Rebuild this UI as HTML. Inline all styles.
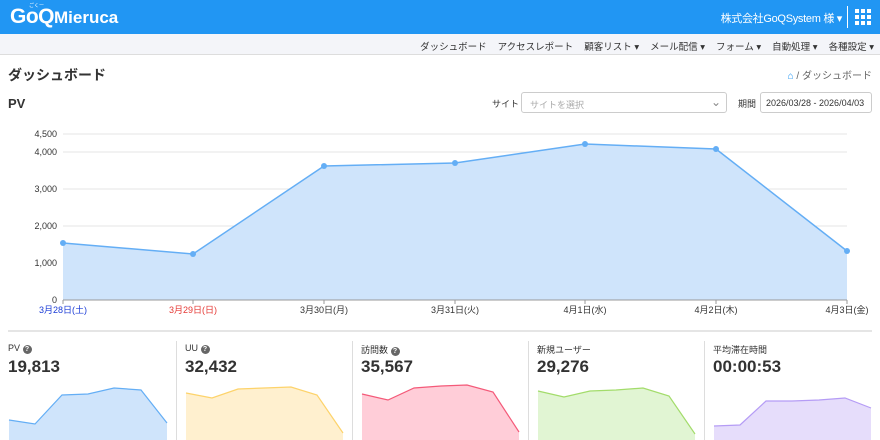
<!DOCTYPE html><html><head><meta charset="utf-8"><style>
body{margin:0;width:880px;height:440px;overflow:hidden;background:#fff;font-family:"Liberation Sans","Noto Sans CJK JP",sans-serif;color:#333;position:relative}
.a{position:absolute;white-space:nowrap}
.n span{margin-left:11px}
</style></head><body>
<div class="a" style="left:0;top:0;width:880px;height:34px;background:#2196f3"></div>
<div class="a" style="left:10px;top:5px;color:#fff;font-weight:bold;font-size:21px;letter-spacing:-0.5px">GoQ<span style="font-size:17px;letter-spacing:0">Mieruca</span></div>
<div class="a" style="left:29px;top:2px;color:#fff;font-size:5px">ごくー</div>
<div class="a" style="right:38px;top:10px;color:#fff;font-size:11px;letter-spacing:-0.3px">株式会社GoQSystem 様 ▾</div>
<div class="a" style="left:847px;top:6px;width:1px;height:22px;background:#fff"></div>
<svg class="a" style="left:855px;top:9px" width="17" height="17"><g fill="#fff"><rect x="0" y="0" width="4" height="4"/><rect x="6" y="0" width="4" height="4"/><rect x="12" y="0" width="4" height="4"/><rect x="0" y="6" width="4" height="4"/><rect x="6" y="6" width="4" height="4"/><rect x="12" y="6" width="4" height="4"/><rect x="0" y="12" width="4" height="4"/><rect x="6" y="12" width="4" height="4"/><rect x="12" y="12" width="4" height="4"/></g></svg>
<div class="a" style="left:0;top:34px;width:880px;height:20px;background:#f4f5f9;border-bottom:1px solid #ddd"></div>
<div class="a n" style="right:6px;top:39px;font-size:9.5px;color:#333;letter-spacing:0"><span>ダッシュボード</span><span>アクセスレポート</span><span>顧客リスト ▾</span><span>メール配信 ▾</span><span>フォーム ▾</span><span>自動処理 ▾</span><span>各種設定 ▾</span></div>
<div class="a" style="left:8px;top:65px;font-size:14px;font-weight:bold">ダッシュボード</div>
<div class="a" style="right:8px;top:67px;font-size:10px;color:#666"><span style="color:#2196f3">⌂</span> / ダッシュボード</div>
<div class="a" style="left:8px;top:96px;font-size:13px;font-weight:bold">PV</div>
<div class="a" style="left:492px;top:97px;font-size:9px">サイト</div>
<div class="a" style="left:521px;top:92px;width:206px;height:21px;border:1px solid #ccc;border-radius:3px;box-sizing:border-box;font-size:9px;color:#aaa;padding:5px 8px">サイトを選択<span style="position:absolute;right:5px;top:2px;color:#888;font-size:12px">⌄</span></div>
<div class="a" style="left:738px;top:97px;font-size:9px">期間</div>
<div class="a" style="left:760px;top:92px;width:112px;height:21px;border:1px solid #ccc;border-radius:3px;box-sizing:border-box;font-size:9px;padding:5px 5px">2026/03/28 - 2026/04/03</div>
<svg class="a" style="left:0;top:120px" width="880" height="200">
<g stroke="#e5e5e5" stroke-width="1"><line x1="63" y1="14" x2="847" y2="14"/><line x1="63" y1="32" x2="847" y2="32"/><line x1="63" y1="69" x2="847" y2="69"/><line x1="63" y1="106" x2="847" y2="106"/><line x1="63" y1="143" x2="847" y2="143"/></g>
<polygon points="63,123 193,134 324,46 455,43 585,24 716,29 847,131 847,180 63,180" fill="#cfe4fb"/>
<polyline points="63,123 193,134 324,46 455,43 585,24 716,29 847,131" fill="none" stroke="#64aef5" stroke-width="1.5"/>
<g fill="#64aef5"><circle cx="63" cy="123" r="3"/><circle cx="193" cy="134" r="3"/><circle cx="324" cy="46" r="3"/><circle cx="455" cy="43" r="3"/><circle cx="585" cy="24" r="3"/><circle cx="716" cy="29" r="3"/><circle cx="847" cy="131" r="3"/></g>
<line x1="63" y1="180" x2="847" y2="180" stroke="#999"/>
<g stroke="#999"><line x1="63" y1="180" x2="63" y2="184"/><line x1="193" y1="180" x2="193" y2="184"/><line x1="324" y1="180" x2="324" y2="184"/><line x1="455" y1="180" x2="455" y2="184"/><line x1="585" y1="180" x2="585" y2="184"/><line x1="716" y1="180" x2="716" y2="184"/><line x1="847" y1="180" x2="847" y2="184"/></g>
<g font-size="9" fill="#333" text-anchor="end" font-family="Liberation Sans,sans-serif"><text x="57" y="17">4,500</text><text x="57" y="35">4,000</text><text x="57" y="72">3,000</text><text x="57" y="109">2,000</text><text x="57" y="146">1,000</text><text x="57" y="183">0</text></g>
<g font-size="9" text-anchor="middle" font-family="Liberation Sans,Noto Sans CJK JP,sans-serif" fill="#333"><text x="63" y="193" fill="#1a3bd6">3月28日(土)</text><text x="193" y="193" fill="#e53935">3月29日(日)</text><text x="324" y="193">3月30日(月)</text><text x="455" y="193">3月31日(火)</text><text x="585" y="193">4月1日(水)</text><text x="716" y="193">4月2日(木)</text><text x="847" y="193">4月3日(金)</text></g>
</svg>
<div class="a" style="left:8px;top:330px;width:864px;height:2px;background:#e5e5e5"></div>
<div class="a" style="left:176px;top:341px;width:1px;height:99px;background:#ddd"></div>
<div class="a" style="left:352px;top:341px;width:1px;height:99px;background:#ddd"></div>
<div class="a" style="left:528px;top:341px;width:1px;height:99px;background:#ddd"></div>
<div class="a" style="left:704px;top:341px;width:1px;height:99px;background:#ddd"></div>
<div class="a" style="left:8px;top:343px;font-size:9px">PV <span style="display:inline-block;width:9px;height:9px;border-radius:50%;background:#666;color:#fff;font-size:7px;text-align:center;line-height:9px;font-weight:bold">?</span></div>
<div class="a" style="left:185px;top:343px;font-size:9px">UU <span style="display:inline-block;width:9px;height:9px;border-radius:50%;background:#666;color:#fff;font-size:7px;text-align:center;line-height:9px;font-weight:bold">?</span></div>
<div class="a" style="left:361px;top:343px;font-size:9px">訪問数 <span style="display:inline-block;width:9px;height:9px;border-radius:50%;background:#666;color:#fff;font-size:7px;text-align:center;line-height:9px;font-weight:bold">?</span></div>
<div class="a" style="left:537px;top:343px;font-size:9px">新規ユーザー</div>
<div class="a" style="left:713px;top:343px;font-size:9px">平均滞在時間</div>
<div class="a" style="left:8px;top:357px;font-size:17px;font-weight:bold">19,813</div>
<div class="a" style="left:185px;top:357px;font-size:17px;font-weight:bold">32,432</div>
<div class="a" style="left:361px;top:357px;font-size:17px;font-weight:bold">35,567</div>
<div class="a" style="left:537px;top:357px;font-size:17px;font-weight:bold">29,276</div>
<div class="a" style="left:713px;top:357px;font-size:17px;font-weight:bold">00:00:53</div>
<svg class="a" style="left:0;top:0" width="880" height="440">
<polygon points="9,420 35,424 62,395 88,394 114,388 141,390 167,423 167,440 9,440" fill="#cfe4fb"/><polyline points="9,420 35,424 62,395 88,394 114,388 141,390 167,423" fill="none" stroke="#64aef5" stroke-width="1.2"/>
<polygon points="186,393 212,398 238,389 264,388 291,387 317,395 343,433 343,440 186,440" fill="#fff0cf"/><polyline points="186,393 212,398 238,389 264,388 291,387 317,395 343,433" fill="none" stroke="#fdd36b" stroke-width="1.2"/>
<polygon points="362,394 388,400 414,388 441,386 467,385 493,392 519,432 519,440 362,440" fill="#ffcdd8"/><polyline points="362,394 388,400 414,388 441,386 467,385 493,392 519,432" fill="none" stroke="#f45a79" stroke-width="1.2"/>
<polygon points="538,391 564,397 590,391 616,390 643,388 669,396 695,434 695,440 538,440" fill="#e1f5d3"/><polyline points="538,391 564,397 590,391 616,390 643,388 669,396 695,434" fill="none" stroke="#a3dc6b" stroke-width="1.2"/>
<polygon points="714,426 740,425 766,401 792,401 819,400 845,398 871,408 871,440 714,440" fill="#e6ddfb"/><polyline points="714,426 740,425 766,401 792,401 819,400 845,398 871,408" fill="none" stroke="#b59cf5" stroke-width="1.2"/>
</svg>
</body></html>
